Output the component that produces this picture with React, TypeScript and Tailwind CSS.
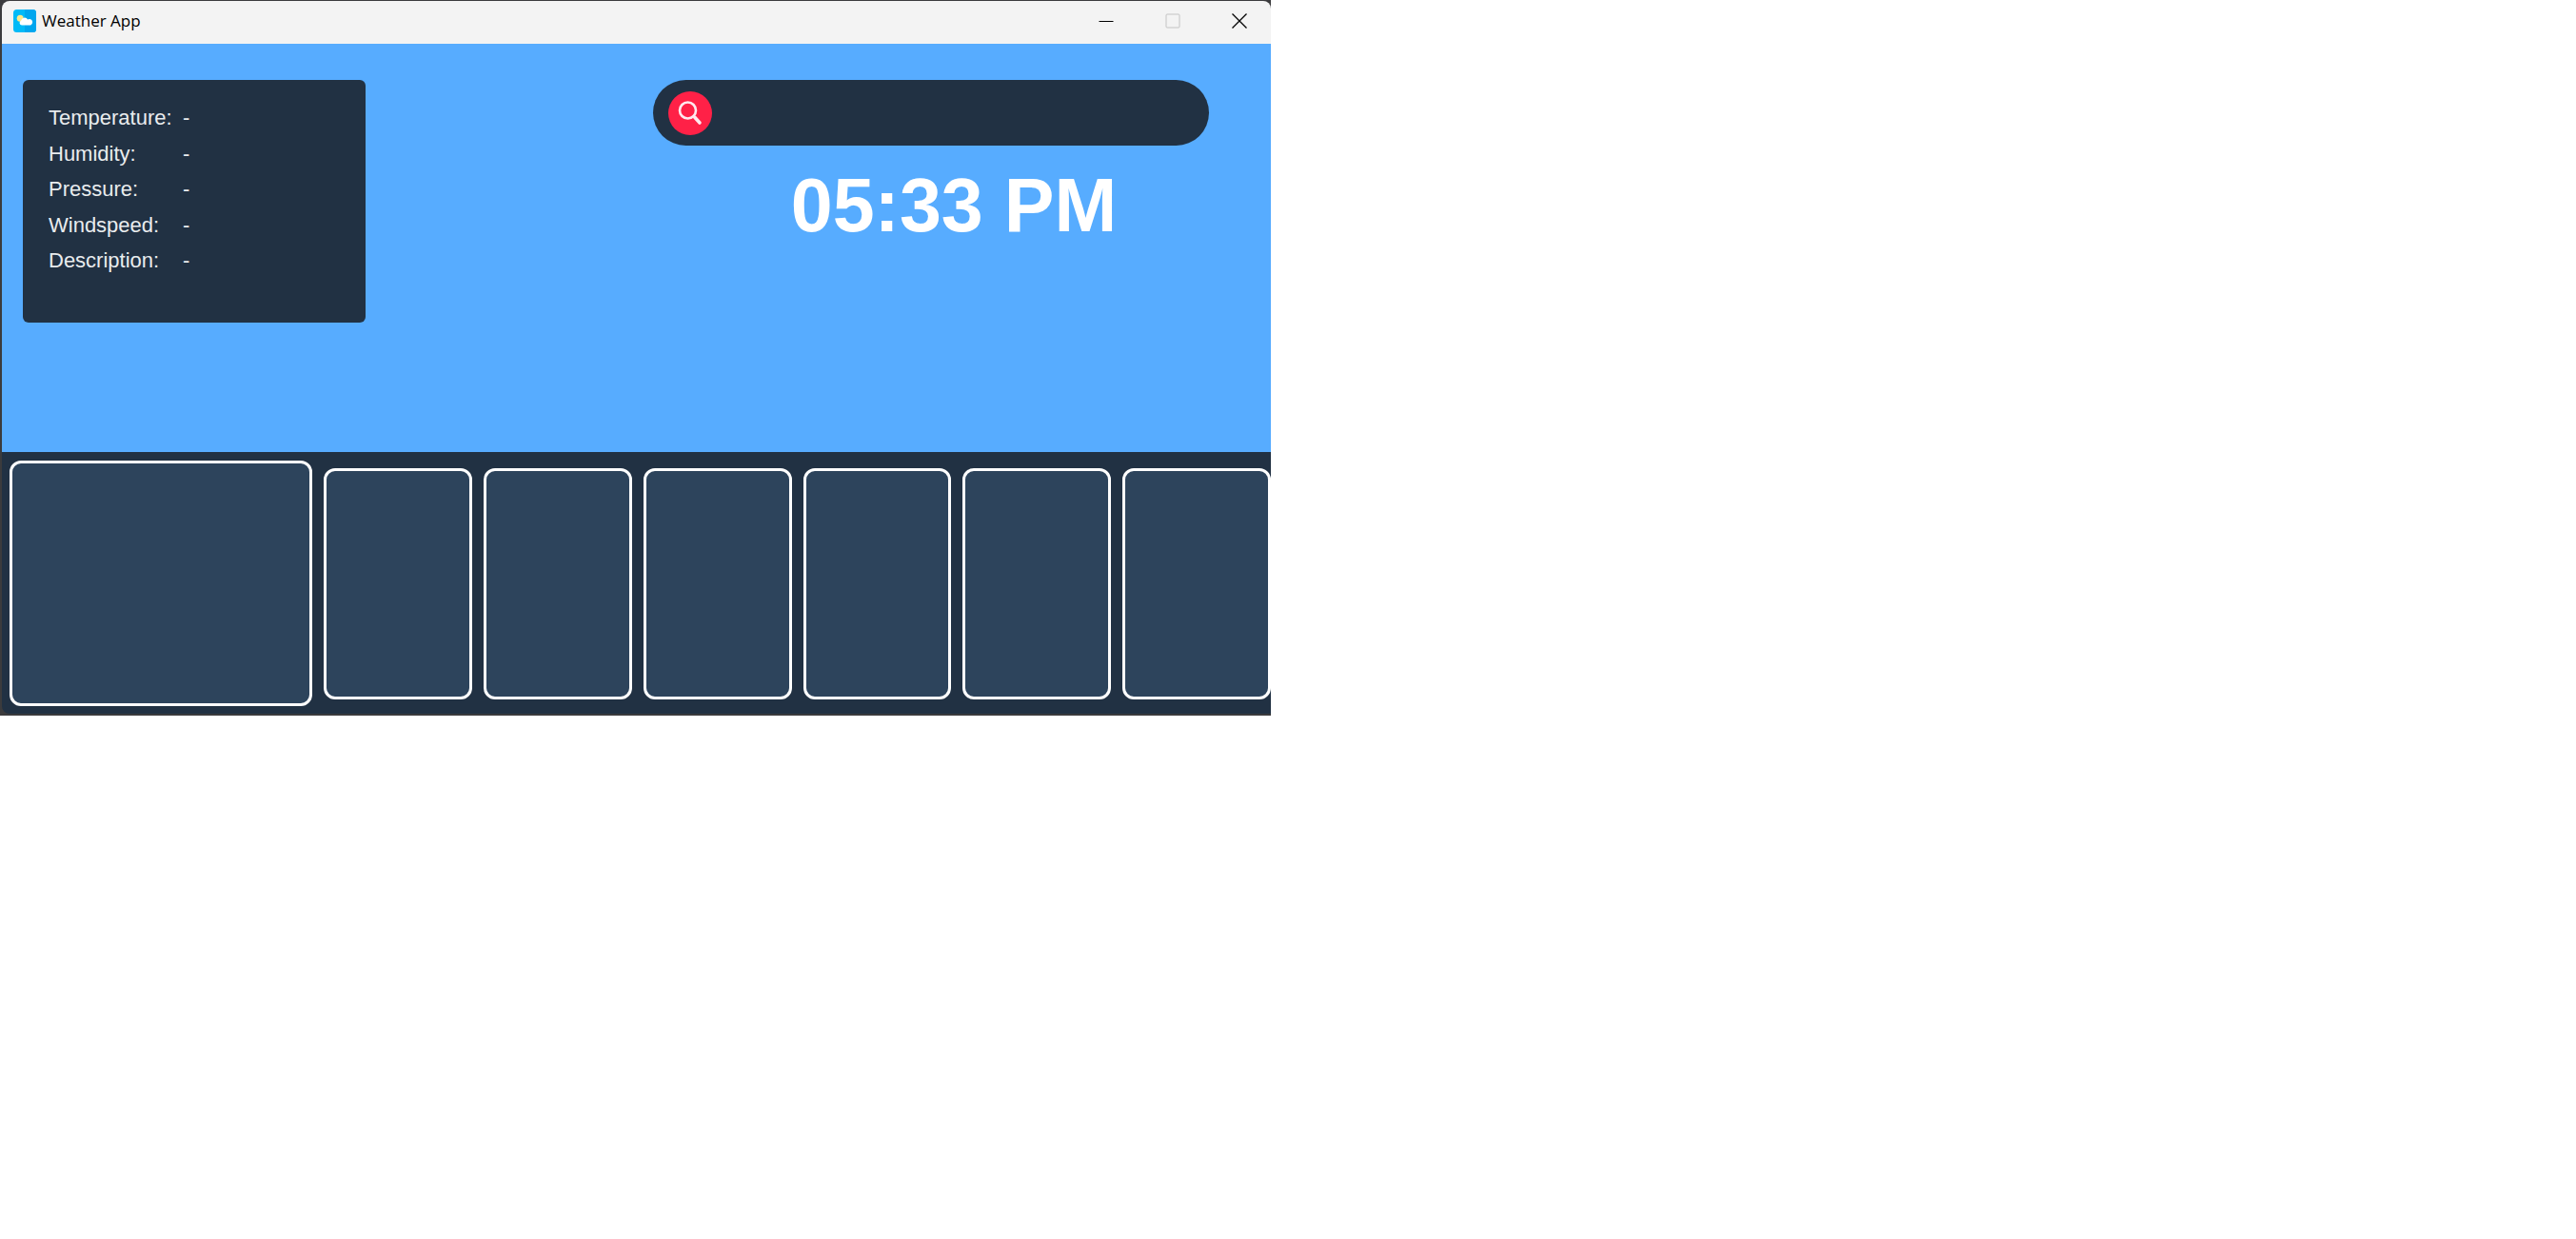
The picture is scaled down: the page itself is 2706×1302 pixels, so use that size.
const readings = ["Temperature", "Humidity", "Pressure", "Windspeed", "Description"];
const days = [1, 2, 3, 4, 5, 6];

function AppIcon() {
  return (
    <svg viewBox="0 0 24 24" className="size-6" aria-hidden="true">
      <rect width="24" height="24" rx="3.500" fill="#00baf7" />
      <path d="M12 0h8.500A3.500 3.500 0 0 1 24 3.500v17a3.500 3.500 0 0 1-3.500 3.500H12z" fill="#00a6ee" />
      <circle cx="7.200" cy="9.300" r="3.500" fill="#ffe88a" />
      <path d="M9 16.500a2.500 2.500 0 0 1-.9-4.800a3.800 3.800 0 0 1 7-1.200a3.300 3.300 0 1 1 1 6z" fill="#fff" />
    </svg>
  );
}

function SearchIcon() {
  return (
    <svg viewBox="0 0 46 46" className="size-full" fill="none" stroke="#ffe9ee" aria-hidden="true">
      <circle cx="20.500" cy="20" r="8.500" strokeWidth="2.600" />
      <path d="M26.500 26l2 2" strokeWidth="2.600" />
      <path d="M28 27.500l5 5.500" strokeWidth="3.600" strokeLinecap="round" />
    </svg>
  );
}

function TitleBar() {
  return (
    <header className="flex h-[45px] items-center justify-between rounded-t-lg bg-[#f3f3f3] pb-[3px] pl-3">
      <div className="flex items-center gap-[6px]">
        <AppIcon />
        <h1 className="font-['Open_Sans',sans-serif] text-[17px] leading-6 text-black">Weather App</h1>
      </div>
      <div className="flex h-full">
        <button aria-label="Minimize" className="grid w-[66px] place-items-center">
          <svg viewBox="0 0 16 16" className="size-4" stroke="#000">
            <path d="M.5 8.500h15" />
          </svg>
        </button>
        <button aria-label="Maximize" disabled className="grid w-[74px] place-items-center">
          <svg viewBox="0 0 16 16" className="size-4" fill="none" stroke="#c3c3c3">
            <rect x="1" y="1" width="14" height="14" rx="1" />
          </svg>
        </button>
        <button aria-label="Close" className="grid w-[66px] place-items-center">
          <svg viewBox="0 0 16 16" className="size-4" stroke="#000" strokeWidth="1.300">
            <path d="M.5.5l15 15M15.500.5l-15 15" />
          </svg>
        </button>
      </div>
    </header>
  );
}

export default function App() {
  return (
    <div className="min-h-screen bg-white font-['Liberation_Sans',Arial,sans-serif]">
      <main className="w-full max-w-[1335px] overflow-hidden border-t border-b-2 border-l-2 border-[#3b3b3d] bg-[#3b3b3d]">
        <TitleBar />
        <section className="flex items-start justify-between bg-[#57acff] pt-[38px] pr-[65px] pb-[136px] pl-[22px]">
          <dl className="grid h-[255px] w-[360px] grid-cols-[141px_1fr] content-between rounded-md bg-[#213143] pt-[22px] pb-[47px] pl-[27px] text-[22px] leading-9 text-[#e9ecee]">
            {readings.map((name) => (
              <div key={name} className="contents">
                <dt>{name}:</dt>
                <dd>-</dd>
              </div>
            ))}
          </dl>
          <div className="flex w-[584px] flex-col items-center">
            <form className="flex h-[69px] w-full items-center rounded-full bg-[#213143] pl-4" onSubmit={(e) => e.preventDefault()}>
              <button aria-label="Search" className="size-[46px] shrink-0 rounded-full bg-[#ff2147]">
                <SearchIcon />
              </button>
              <input aria-label="City" className="h-full min-w-0 flex-1 bg-transparent px-6 text-center text-3xl text-white outline-none" />
            </form>
            <time className="mt-[17px] pl-12 text-[79px] leading-[92px] font-bold text-white">05:33 PM</time>
          </div>
        </section>
        <section className="grid grid-cols-[319fr_repeat(6,156fr)] items-center gap-3 rounded-bl-lg bg-[#213143] pt-[9px] pb-2 pl-2">
          <article className="h-[258px] rounded-xl border-[3px] border-white bg-[#2d445c]" />
          {days.map((day) => (
            <article key={day} className="h-[243px] rounded-xl border-[3px] border-white bg-[#2d445c]" />
          ))}
        </section>
      </main>
    </div>
  );
}
